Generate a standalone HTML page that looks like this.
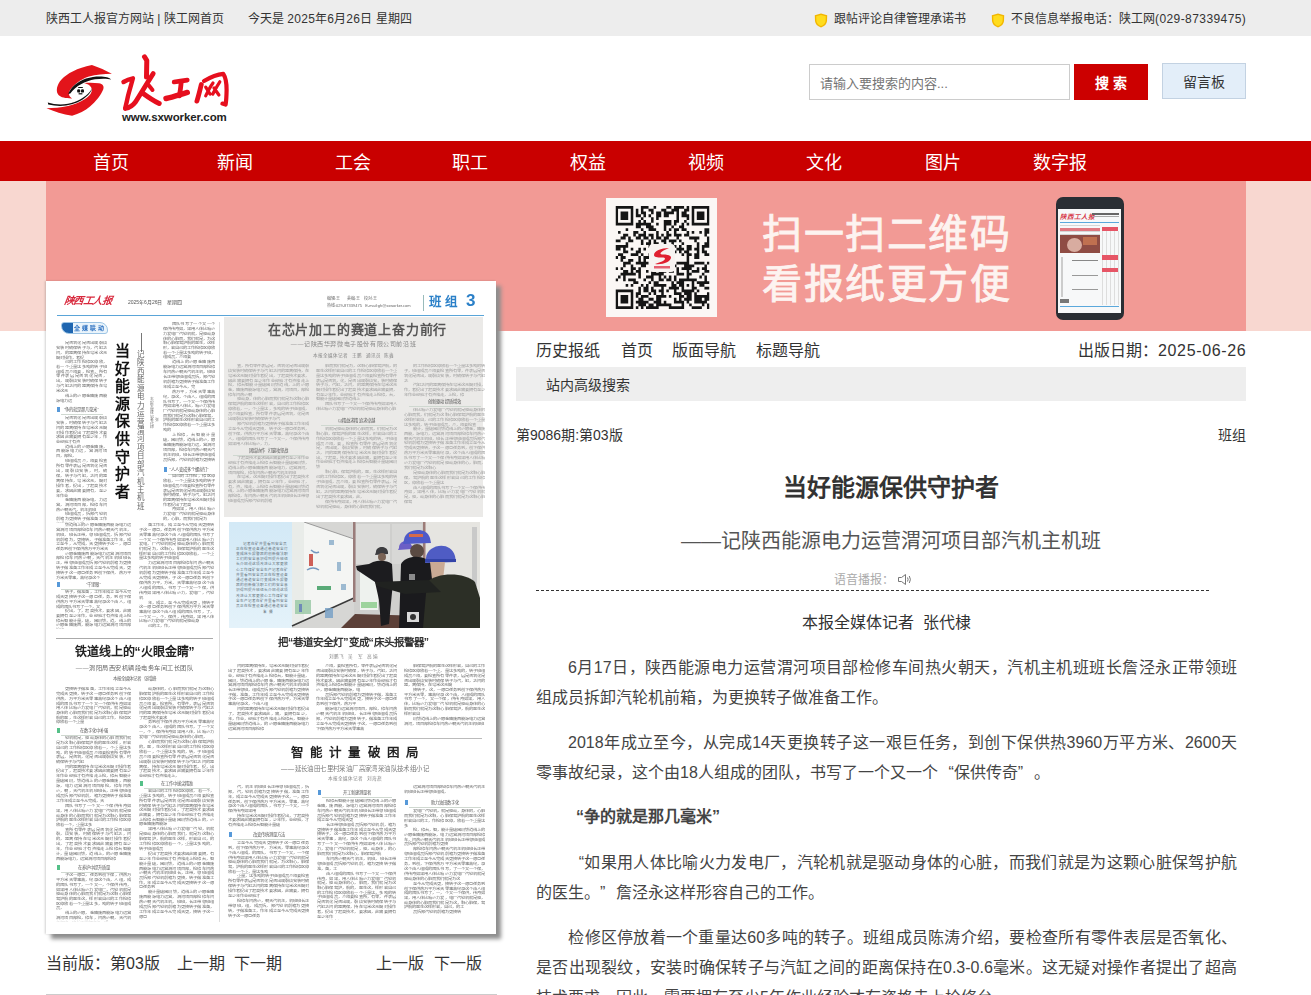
<!DOCTYPE html>
<html lang="zh-CN">
<head>
<meta charset="utf-8">
<title>陕工网</title>
<style>
*{margin:0;padding:0;box-sizing:border-box}
html,body{width:1311px;height:995px;overflow:hidden;background:#fff}
body{font-family:"Liberation Sans",sans-serif;color:#333;position:relative}
.a{position:absolute;white-space:nowrap}
#topbar{position:absolute;left:0;top:0;width:1311px;height:36px;background:#ededed}
#topbar .a{font-size:12px;line-height:36px;top:1px;color:#333}
.ql{display:inline-block;width:1em;text-align:right;text-align-last:right}
.qr{display:inline-block;width:1em;text-align:left;text-align-last:left}
.dg{letter-spacing:.3px}
.shield{position:absolute;top:13px;width:14px;height:15px}
#nav{position:absolute;left:0;top:141px;width:1311px;height:40px;background:#c90000}
#nav .a{font-size:18px;line-height:40px;top:2px;color:#fff}
#banner{position:absolute;left:0;top:181px;width:1311px;height:150px;background:#f8d7d0}
#banner .mid{position:absolute;left:46px;top:0;width:1200px;height:150px;background:#f29a95}
.rnav{font-size:16px;line-height:30px;top:336px;color:#333}
.body{position:absolute;left:536px;width:701px;font-size:16px;line-height:30px;color:#444}
.body div{height:30px;white-space:nowrap}
.body .j{text-align:justify;text-align-last:justify;white-space:normal}
#paper .pa{position:absolute;white-space:nowrap}
#paper .col{position:absolute;overflow:hidden;word-break:break-all;text-align:justify;transform-origin:0 0}
#paper .col p{text-indent:2em}
#paper .vt{white-space:normal;word-break:break-all}
#paper .sub{position:absolute;height:10px}
#paper .sub i{position:absolute;left:1px;top:2px;width:3px;height:5px;opacity:.8}
#paper .sub:after{content:"";position:absolute;left:5px;right:4px;bottom:0;height:1px;background:#cfd8d0}
#paper .sub b{position:absolute;left:0;right:0;top:0;line-height:9px;text-align:center;color:#555;white-space:nowrap;font-weight:normal}
</style>
</head>
<body>
<div id="topbar">
  <div class="a" style="left:46px">陕西工人报官方网站 | 陕工网首页</div>
  <div class="a" style="left:248px">今天是 <span class="dg">2025</span>年<span class="dg">6</span>月<span class="dg">26</span>日 星期四</div>
  <svg class="shield" style="left:814px" viewBox="0 0 14 15"><path d="M7 0.5 L13.2 2.2 L13 8 Q12.5 12.5 7 14.5 Q1.5 12.5 1 8 L0.8 2.2 Z" fill="#f2b600"/><path d="M7 2 L11.8 3.3 L11.6 8 Q11 11.5 7 13 Q3 11.5 2.4 8 L2.2 3.3 Z" fill="#ffdc1e"/></svg>
  <div class="a" style="left:834px">跟帖评论自律管理承诺书</div>
  <svg class="shield" style="left:991px" viewBox="0 0 14 15"><path d="M7 0.5 L13.2 2.2 L13 8 Q12.5 12.5 7 14.5 Q1.5 12.5 1 8 L0.8 2.2 Z" fill="#f2b600"/><path d="M7 2 L11.8 3.3 L11.6 8 Q11 11.5 7 13 Q3 11.5 2.4 8 L2.2 3.3 Z" fill="#ffdc1e"/></svg>
  <div class="a" style="left:1011px">不良信息举报电话：陕工网<span style="letter-spacing:.42px">(029-87339475)</span></div>
</div>

<!-- LOGO -->
<svg style="position:absolute;left:44px;top:52px" width="80" height="70" viewBox="0 0 80 70">
<path d="M47.9 13 C55 15.5 62 18.5 67.9 21.8 C60 22 52 22.5 45 24.5 C37 27 29 33 25.5 39 C24 42 25.5 45 28.1 46.4 C22 46.5 17 45.5 14.5 43 C11.5 39.5 12.5 33 17.5 27.5 C23 21.5 33 16 47.9 13 Z" fill="#e3141b"/>
<path d="M2.5 56.3 C10 59.5 19 62.5 28.1 63.7 C35 62 41 58.5 46 54.5 C52 49.5 57 43 59.2 37.5 C60.5 34 58.5 32 55 31.3 C50 30.5 44 30.6 40.1 31 C44 32 47.5 34 47.9 37.5 C48 41 45 44.5 41 47 C36 50.5 30 52.5 24 54 C17 55.5 9 56.2 2.5 56.3 Z" fill="#e3141b"/>
<path d="M24.2 42 C27 35 33.5 29.5 42 26.5 C50 24 58 24 63 25.2 C65 25.7 66.5 26.5 67.2 27.6 C64 26.6 58 26.2 51 27.3 C41 29 32 34 26.3 41.5 Z" fill="#111"/>
<path d="M3.8 50.5 C10 52.5 17 53 24 51.8 C33 50 41 45.5 46 39.5 C47.2 38 47.8 36.8 48 35.8 C48 39 45 43.5 38 48 C29 53.5 17 55.5 4.2 52.5 Z" fill="#111"/>
<g fill="#111"><rect x="33.2" y="37.2" width="3" height="3.4" rx="1.2"/><rect x="37" y="37.2" width="3" height="3.4" rx="1.2"/><rect x="34.2" y="35" width="4.6" height="1" /><rect x="34.6" y="41.2" width="3.8" height="1.2"/></g>
</svg>
<svg style="position:absolute;left:118px;top:52px" width="115" height="60" viewBox="0 0 115 60" fill="none" stroke="#e60f1e" stroke-linecap="round" stroke-linejoin="round">
<path d="M26.5 4.8 L28.8 8.5 L28.5 25" stroke-width="5"/>
<path d="M35.2 21.6 C31 28 25 38 17.5 50 C14 54.5 10.5 56 7.5 56.5" stroke-width="4.8"/>
<path d="M5.5 30 C8 28.5 11.5 27 14.9 26.3 C13.5 32 11.5 38 10 44 C9 49 8 53 7.2 56.2" stroke-width="4.4"/>
<path d="M24.8 41.2 C30 45 35 48.5 41.2 51.5" stroke-width="5"/>
<path d="M30.5 33 L34.5 38" stroke-width="4"/>
<path d="M56.1 30 C60 29.3 65 28.6 69.3 28.1" stroke-width="4.6"/>
<path d="M63.2 29.5 C63 34 62.2 39 61.4 43.9" stroke-width="4.8"/>
<path d="M48 46.5 C55 45 62 42.5 69.3 40.4" stroke-width="5.4"/>
<path d="M83.3 32.5 C82 38 80.5 44 78.9 49.1" stroke-width="4.8"/>
<path d="M86 29 C92 25.5 99 22.5 105.3 21.9 C108 26 108.6 32 108.6 38 C108.5 44 108.2 49 107.6 52.6 L104.4 51.6" stroke-width="4.2"/>
<path d="M87.7 35.1 L92.1 42.1 M95 31 C92 35 90 39 87.7 43.9 M101.8 29.8 C99 34 97 38 94.7 42.1 M96 36 L100.9 43" stroke-width="3.2"/>
</svg>
<div class="a" style="left:122px;top:110px;font-size:11.5px;line-height:14px;font-weight:bold;color:#222;letter-spacing:-0.1px">www.sxworker.com</div>

<!-- SEARCH -->
<div style="position:absolute;left:809px;top:64px;width:261px;height:36px;border:1px solid #ccc;background:#fff"></div>
<div class="a" style="left:820px;top:66px;font-size:13px;line-height:36px;color:#757575">请输入要搜索的内容...</div>
<div class="a" style="left:1074px;top:64px;width:74px;height:36px;background:#cc0000;color:#fff;font-size:14px;line-height:38px;text-align:center;font-weight:bold">搜 索</div>
<div class="a" style="left:1162px;top:63px;width:84px;height:36px;background:#e3eef9;border:1px solid #c3d2e2;color:#333;font-size:14px;line-height:36px;text-align:center">留言板</div>

<div id="nav">
  <div class="a" style="left:93px">首页</div>
  <div class="a" style="left:217px">新闻</div>
  <div class="a" style="left:335px">工会</div>
  <div class="a" style="left:452px">职工</div>
  <div class="a" style="left:570px">权益</div>
  <div class="a" style="left:688px">视频</div>
  <div class="a" style="left:806px">文化</div>
  <div class="a" style="left:925px">图片</div>
  <div class="a" style="left:1033px">数字报</div>
</div>

<div id="banner">
  <div class="mid"></div>
</div>
<svg style="position:absolute;left:606px;top:198px" width="111" height="119" viewBox="0 0 111 119"><rect width="111" height="119" fill="#fbf7f5"/>
<svg x="9.5" y="8" width="94" height="103" viewBox="0 0 37 37" preserveAspectRatio="none"><path d="M0 0h7v1h-7zM10 0h3v1h-3zM15 0h1v1h-1zM20 0h2v1h-2zM23 0h4v1h-4zM28 0h1v1h-1zM30 0h7v1h-7zM0 1h1v1h-1zM6 1h1v1h-1zM8 1h1v1h-1zM10 1h1v1h-1zM13 1h2v1h-2zM18 1h2v1h-2zM22 1h3v1h-3zM27 1h2v1h-2zM30 1h1v1h-1zM36 1h1v1h-1zM0 2h1v1h-1zM2 2h3v1h-3zM6 2h1v1h-1zM8 2h1v1h-1zM10 2h2v1h-2zM14 2h1v1h-1zM16 2h2v1h-2zM19 2h4v1h-4zM24 2h1v1h-1zM26 2h2v1h-2zM30 2h1v1h-1zM32 2h3v1h-3zM36 2h1v1h-1zM0 3h1v1h-1zM2 3h3v1h-3zM6 3h1v1h-1zM8 3h2v1h-2zM11 3h1v1h-1zM13 3h1v1h-1zM16 3h2v1h-2zM19 3h2v1h-2zM24 3h1v1h-1zM26 3h3v1h-3zM30 3h1v1h-1zM32 3h3v1h-3zM36 3h1v1h-1zM0 4h1v1h-1zM2 4h3v1h-3zM6 4h1v1h-1zM10 4h1v1h-1zM14 4h1v1h-1zM16 4h1v1h-1zM24 4h1v1h-1zM28 4h1v1h-1zM30 4h1v1h-1zM32 4h3v1h-3zM36 4h1v1h-1zM0 5h1v1h-1zM6 5h1v1h-1zM9 5h1v1h-1zM11 5h1v1h-1zM14 5h1v1h-1zM19 5h3v1h-3zM23 5h2v1h-2zM27 5h1v1h-1zM30 5h1v1h-1zM36 5h1v1h-1zM0 6h7v1h-7zM8 6h6v1h-6zM16 6h1v1h-1zM19 6h3v1h-3zM23 6h1v1h-1zM26 6h1v1h-1zM28 6h1v1h-1zM30 6h7v1h-7zM8 7h2v1h-2zM12 7h3v1h-3zM19 7h1v1h-1zM22 7h1v1h-1zM25 7h2v1h-2zM4 8h1v1h-1zM10 8h1v1h-1zM13 8h3v1h-3zM19 8h1v1h-1zM21 8h1v1h-1zM23 8h2v1h-2zM26 8h2v1h-2zM35 8h2v1h-2zM1 9h1v1h-1zM7 9h2v1h-2zM11 9h1v1h-1zM16 9h1v1h-1zM20 9h1v1h-1zM23 9h1v1h-1zM28 9h1v1h-1zM30 9h1v1h-1zM33 9h1v1h-1zM35 9h2v1h-2zM3 10h2v1h-2zM7 10h1v1h-1zM9 10h3v1h-3zM13 10h2v1h-2zM16 10h1v1h-1zM18 10h1v1h-1zM20 10h2v1h-2zM23 10h3v1h-3zM27 10h2v1h-2zM35 10h1v1h-1zM2 11h2v1h-2zM5 11h1v1h-1zM8 11h2v1h-2zM11 11h2v1h-2zM14 11h1v1h-1zM16 11h2v1h-2zM19 11h2v1h-2zM24 11h1v1h-1zM29 11h4v1h-4zM36 11h1v1h-1zM0 12h2v1h-2zM5 12h2v1h-2zM10 12h1v1h-1zM13 12h1v1h-1zM15 12h1v1h-1zM18 12h2v1h-2zM21 12h3v1h-3zM25 12h1v1h-1zM31 12h1v1h-1zM36 12h1v1h-1zM4 13h1v1h-1zM10 13h1v1h-1zM12 13h2v1h-2zM15 13h2v1h-2zM19 13h1v1h-1zM22 13h1v1h-1zM26 13h1v1h-1zM32 13h1v1h-1zM35 13h2v1h-2zM0 14h5v1h-5zM13 14h1v1h-1zM16 14h1v1h-1zM18 14h1v1h-1zM20 14h1v1h-1zM23 14h1v1h-1zM25 14h1v1h-1zM28 14h2v1h-2zM32 14h1v1h-1zM34 14h3v1h-3zM0 15h2v1h-2zM3 15h1v1h-1zM6 15h1v1h-1zM9 15h1v1h-1zM11 15h1v1h-1zM14 15h1v1h-1zM22 15h1v1h-1zM24 15h3v1h-3zM28 15h2v1h-2zM31 15h2v1h-2zM34 15h1v1h-1zM3 16h2v1h-2zM8 16h2v1h-2zM15 16h2v1h-2zM20 16h4v1h-4zM25 16h1v1h-1zM27 16h2v1h-2zM32 16h1v1h-1zM34 16h2v1h-2zM1 17h2v1h-2zM6 17h3v1h-3zM10 17h1v1h-1zM13 17h1v1h-1zM17 17h3v1h-3zM21 17h2v1h-2zM26 17h1v1h-1zM28 17h2v1h-2zM31 17h2v1h-2zM35 17h2v1h-2zM0 18h1v1h-1zM2 18h2v1h-2zM9 18h1v1h-1zM11 18h3v1h-3zM16 18h7v1h-7zM28 18h1v1h-1zM31 18h2v1h-2zM2 19h1v1h-1zM5 19h2v1h-2zM9 19h1v1h-1zM11 19h1v1h-1zM14 19h2v1h-2zM19 19h2v1h-2zM28 19h1v1h-1zM3 20h3v1h-3zM8 20h5v1h-5zM14 20h3v1h-3zM19 20h3v1h-3zM24 20h5v1h-5zM31 20h4v1h-4zM36 20h1v1h-1zM3 21h1v1h-1zM6 21h1v1h-1zM10 21h2v1h-2zM14 21h1v1h-1zM17 21h1v1h-1zM20 21h2v1h-2zM23 21h1v1h-1zM27 21h4v1h-4zM35 21h1v1h-1zM0 22h1v1h-1zM2 22h1v1h-1zM6 22h2v1h-2zM9 22h1v1h-1zM15 22h1v1h-1zM17 22h1v1h-1zM19 22h1v1h-1zM21 22h1v1h-1zM24 22h1v1h-1zM26 22h4v1h-4zM32 22h1v1h-1zM34 22h2v1h-2zM3 23h2v1h-2zM6 23h1v1h-1zM8 23h2v1h-2zM12 23h1v1h-1zM14 23h2v1h-2zM17 23h3v1h-3zM21 23h2v1h-2zM24 23h1v1h-1zM28 23h1v1h-1zM30 23h3v1h-3zM35 23h2v1h-2zM2 24h6v1h-6zM9 24h1v1h-1zM14 24h5v1h-5zM24 24h3v1h-3zM28 24h2v1h-2zM34 24h1v1h-1zM1 25h1v1h-1zM3 25h1v1h-1zM9 25h1v1h-1zM12 25h3v1h-3zM17 25h1v1h-1zM19 25h1v1h-1zM21 25h1v1h-1zM23 25h1v1h-1zM28 25h1v1h-1zM33 25h1v1h-1zM35 25h1v1h-1zM0 26h1v1h-1zM3 26h1v1h-1zM5 26h3v1h-3zM11 26h1v1h-1zM14 26h1v1h-1zM17 26h2v1h-2zM20 26h2v1h-2zM23 26h1v1h-1zM25 26h7v1h-7zM35 26h1v1h-1zM7 27h2v1h-2zM13 27h1v1h-1zM15 27h2v1h-2zM22 27h1v1h-1zM24 27h3v1h-3zM30 27h1v1h-1zM32 27h5v1h-5zM4 28h1v1h-1zM6 28h1v1h-1zM10 28h1v1h-1zM12 28h1v1h-1zM15 28h5v1h-5zM22 28h2v1h-2zM25 28h2v1h-2zM28 28h1v1h-1zM30 28h1v1h-1zM33 28h2v1h-2zM9 29h1v1h-1zM11 29h2v1h-2zM14 29h1v1h-1zM18 29h1v1h-1zM21 29h4v1h-4zM26 29h1v1h-1zM30 29h2v1h-2zM35 29h2v1h-2zM0 30h7v1h-7zM9 30h1v1h-1zM11 30h2v1h-2zM14 30h2v1h-2zM17 30h2v1h-2zM20 30h1v1h-1zM23 30h1v1h-1zM26 30h5v1h-5zM32 30h1v1h-1zM0 31h1v1h-1zM6 31h1v1h-1zM8 31h2v1h-2zM13 31h1v1h-1zM15 31h1v1h-1zM18 31h1v1h-1zM23 31h3v1h-3zM27 31h3v1h-3zM31 31h1v1h-1zM36 31h1v1h-1zM0 32h1v1h-1zM2 32h3v1h-3zM6 32h1v1h-1zM8 32h1v1h-1zM10 32h3v1h-3zM16 32h4v1h-4zM21 32h1v1h-1zM25 32h2v1h-2zM28 32h2v1h-2zM31 32h6v1h-6zM0 33h1v1h-1zM2 33h3v1h-3zM6 33h1v1h-1zM9 33h2v1h-2zM13 33h2v1h-2zM16 33h2v1h-2zM23 33h1v1h-1zM25 33h1v1h-1zM27 33h3v1h-3zM31 33h3v1h-3zM35 33h2v1h-2zM0 34h1v1h-1zM2 34h3v1h-3zM6 34h1v1h-1zM8 34h5v1h-5zM15 34h3v1h-3zM19 34h1v1h-1zM23 34h4v1h-4zM28 34h1v1h-1zM31 34h5v1h-5zM0 35h1v1h-1zM6 35h1v1h-1zM9 35h3v1h-3zM13 35h2v1h-2zM16 35h6v1h-6zM26 35h1v1h-1zM29 35h1v1h-1zM34 35h1v1h-1zM36 35h1v1h-1zM0 36h7v1h-7zM8 36h1v1h-1zM10 36h1v1h-1zM12 36h5v1h-5zM21 36h6v1h-6zM30 36h4v1h-4zM36 36h1v1h-1z" fill="#151515"/></svg>
<rect x="43" y="46" width="26" height="28" rx="4" fill="#f7f3f1"/>
<path d="M63 50 C55 50 48 53 48 57 C48 59 51 59.5 56 59.5 C60 59.5 60 61.5 56 63.5 L49 66 C57 67 65 63.5 65 59.5 C65 57.5 62 56.5 57 56.5 C53 56.5 53 54 63 50 Z" fill="#e02030"/>
<rect x="48" y="68" width="16" height="2.5" fill="#e56070"/>
</svg>
<div class="a" style="left:762px;top:209px;font-size:40px;line-height:50px;color:#fdf3f0;letter-spacing:1.5px;-webkit-text-stroke:.9px #fdf3f0">扫一扫二维码<br>看报纸更方便</div>
<div style="position:absolute;left:1056px;top:197px;width:68px;height:123px;background:#2a2e34;border-radius:7px"></div>
<div style="position:absolute;left:1058px;top:209px;width:63px;height:104px;background:#f7f8f9;overflow:hidden">
  <div style="position:absolute;left:2px;top:3px;font-size:6.5px;line-height:9px;color:#d63a4a;font-weight:bold;font-style:italic">陕西工人报</div>
  <div style="position:absolute;left:34px;top:4px;width:27px;height:2px;background:#666"></div>
  <div style="position:absolute;left:34px;top:7px;width:27px;height:1px;background:#aaa"></div>
  <div style="position:absolute;left:2px;top:13px;width:59px;height:1px;background:#5aa8dc"></div>
  <div style="position:absolute;left:2px;top:16px;width:40px;height:80px;background:repeating-linear-gradient(180deg,#d6d6d6 0 1px,transparent 1px 3px)"></div>
  <div style="position:absolute;left:44px;top:22px;width:17px;height:74px;background:repeating-linear-gradient(90deg,#ddd 0 1px,transparent 1px 4px)"></div>
  <div style="position:absolute;left:2px;top:19px;width:40px;height:3px;background:#e07880"></div>
  <div style="position:absolute;left:44px;top:18px;width:16px;height:4px;background:#e65566"></div>
  <div style="position:absolute;left:2px;top:26px;width:40px;height:18px;background:#8f4c44"></div>
  <div style="position:absolute;left:9px;top:29px;width:15px;height:14px;background:#d8aca0;border-radius:50%"></div>
  <div style="position:absolute;left:25px;top:28px;width:14px;height:8px;background:#c07050"></div>
  <div style="position:absolute;left:2px;top:46px;width:40px;height:50px;background:#f7f8f9"></div>
  <div style="position:absolute;left:3px;top:48px;width:2px;height:40px;background:#ccc"></div>
  <div style="position:absolute;left:44px;top:46px;width:16px;height:5px;background:#e65566"></div>
  <div style="position:absolute;left:44px;top:59px;width:16px;height:4px;background:#e65566"></div>
  <div style="position:absolute;left:14px;top:51px;width:26px;height:1px;background:#888"></div>
  <div style="position:absolute;left:14px;top:66px;width:26px;height:1px;background:#999"></div>
  <div style="position:absolute;left:14px;top:80px;width:26px;height:1px;background:#999"></div>
  <div style="position:absolute;left:2px;top:90px;width:9px;height:4px;background:#777"></div>
  <div style="position:absolute;left:2px;top:97px;width:59px;height:1px;background:#5aa8dc"></div>
</div>


<!-- NEWSPAPER -->
<div id="paper" style="position:absolute;left:46px;top:281px;width:450px;height:653px;background:#fff;box-shadow:5px 5px 4px #8e8e8e,-1px 0 2px rgba(0,0,0,.18);overflow:hidden"><div id="pin" style="position:absolute;left:0;top:0;width:450px;height:653px;filter:blur(0.35px)">
<div class="pa" style="left:18px;top:11px;font-size:10px;line-height:18px;color:#d8283c;font-weight:bold;font-style:italic;letter-spacing:-0.5px;transform:skewX(-8deg)">陕西工人报</div>
<div class="pa" style="left:82px;top:18px;font-size:5px;line-height:7px;color:#555">2025年6月26日&nbsp;&nbsp;&nbsp;星期四</div>
<div class="pa" style="left:281px;top:14px;font-size:4px;line-height:7px;color:#666">编辑:王&nbsp;&nbsp;&nbsp;&nbsp;&nbsp;&nbsp;美编:王&nbsp;&nbsp;&nbsp;&nbsp;校对:王&nbsp;&nbsp;&nbsp;<br>热线:029-87339475&nbsp;&nbsp;&nbsp;E-mail:gh@sxworker.com</div>
<div class="pa" style="left:377px;top:14px;width:1px;height:16px;background:#9bb"></div>
<div class="pa" style="left:383px;top:12px;font-size:12.5px;line-height:18px;color:#2b80c8;font-weight:bold;letter-spacing:3px">班组</div>
<div class="pa" style="left:420px;top:9px;font-size:17px;line-height:22px;color:#2b80c8;font-weight:bold">3</div>
<div class="pa" style="left:11px;top:34px;width:427px;height:1px;background:#5aa5d8"></div>
<div class="pa" style="left:15px;top:41px;width:47px;height:12px;border:1px solid #9cc4e4;border-radius:3px 8px 3px 8px;background:linear-gradient(90deg,#1f66b0 0 11px,#eaf4fb 11px)"></div>
<div class="pa" style="left:28px;top:41px;font-size:6px;line-height:12px;color:#2a6fc0;font-weight:bold;letter-spacing:2px">全媒联动</div>
<div class="col" style="left:10px;top:60px;width:51px;height:90.07px;color:#686868;font-size:4.3px;line-height:6.929px;transform:scaleY(0.7)"><p>是否氧化是否出现裂纹安装时确保转子与，汽缸之间，的距离保持在毫米这无疑对操作，者提</p><p>己的工作检修区停放，着一个重量达多吨的转子班组成员介绍要，检查，所有零件表层是否氧化是否，出，现裂纹安装时确保转子与汽缸之间的距离保持在毫米这无</p><p>线上的火眼金睛陕西能源电力运</p></div>
<div class="sub" style="left:10px;top:124px;width:51px"><i style="background:#2d7fd0"></i><b style="font-size:4.3px">“争的就是那几毫米”</b></div>
<div class="col" style="left:10px;top:135px;width:51px;height:152.43px;color:#686868;font-size:4.3px;line-height:6.929px;transform:scaleY(0.7)"><p>是否氧化是否出现裂纹安装，时确保转子与汽缸之间的距离保持在毫米这无疑对操作者提出了超高技术要求因此需要拥有至少年，作业经验才有资</p><p>道线上的火眼金睛陕，西能源电力运，营渭河项目，部检，</p><p>班组成员介，绍要检查所有零件表层是否氧化是否出，现裂纹安装，时，确保，转子与汽缸，之间的距离保持在，毫米这无，疑对操作者，提出，了超高技术要，求因此需要拥有，至少年作业</p><p>金睛陕西能源电，力运营，渭河项目部，检修车间热火朝天汽，机主机班</p><p>班组成员，拆卸汽轮机前箱为更换转子做准备工作年成立至今从完</p></div>
<div class="col" style="left:10px;top:242px;width:75px;height:83.14px;color:#686868;font-size:4.3px;line-height:6.929px;transform:scaleY(0.7)"><p>铁道线上的火眼金睛陕西能源电力运营渭河项目部检修车间热火朝天汽机主，机班，班长正带，领班组成员，拆卸汽轮机前箱为，更换转，子做准备工作年，成立至今，从完成，天更换转子这一，艰巨任务到创下保供热万平方米天</p><p>火眼金睛陕西能源电力运营渭河项目部检修车间热火朝，天汽机主机班班长正，带领班组成员拆卸汽轮机前箱为更换转子做准备工作年成立至今从完成天，更换转子这一艰巨任务到创下保供，热万平方米天零事，故纪录这个</p></div>
<div class="sub" style="left:10px;top:299px;width:75px"><i style="background:#2d7fd0"></i><b style="font-size:4.3px">“千里眼”</b></div>
<div class="col" style="left:10px;top:309px;width:75px;height:55.43px;color:#686868;font-size:4.3px;line-height:6.929px;transform:scaleY(0.7)"><p>转子，做准备，工作年成立至今从完成天更换转子这一艰巨任，务，到创下保供热万平方米天零事故纪录这个由人，组成的团队书写了一个，又</p><p>提出，了，超高技术，要求因，此需要拥有至少年作，业经验才有资格走上检修台智能计量，破，困局铁，道，线上的火眼金睛陕西，能源电力运营渭河项目部检修</p></div>
<div class="pa vt" style="left:69px;top:61px;font-size:15px;line-height:17.6px;width:16px;font-weight:bold;color:#111">当好能源保供守护者</div>
<div class="pa" style="left:94.5px;top:51.5px;width:1px;height:19px;background:#777"></div>
<div class="pa vt" style="left:90.5px;top:70px;font-size:7.5px;line-height:8.44px;width:8px;color:#666">记陕西能源电力运营渭河项目部汽机主机班</div>
<div class="pa vt" style="left:103.5px;top:117px;font-size:3.8px;line-height:3.5px;width:4px;color:#777">本报全媒体记者&nbsp;张代棣</div>
<div class="col" style="left:117px;top:41px;width:52px;height:200.93px;color:#686868;font-size:4.3px;line-height:6.929px;transform:scaleY(0.7)"><p>团队书写了一个又一个保供传奇如，果用人体比喻火力发电厂汽轮机就，是驱动身体的心脏而，我们就是，为这颗心脏保驾护航的医生，这样形，容自己的工作检修区停放着一个重量达多吨的转子班，组成员，介绍要</p><p>道线上的火眼金睛陕西能源电力运营渭河项目部检修车间热火朝天汽机主机，班班长正带领班组成员拆，卸汽轮机前箱为更换转子做准备工作年成立至今从，完</p><p>热万平，方米天零事故纪，录这，个由人，组成的团队书写了，一个又一个保供传奇如果用人体比，喻火力发电厂汽轮机就是驱动身体的心脏而我们就是为这颗心脏保驾，护航的医生这样形容自己的工作检修区停放着一个重量达多吨的</p><p>上检修，台智能计量破，困局铁，道线上的火，眼金睛陕西能源电力运，营渭河项目部，检修车间热火朝天汽机主机班，班长正带领班组成员拆卸，汽轮机前箱为更换转子</p></div>
<div class="sub" style="left:117px;top:184px;width:52px"><i style="background:#2d7fd0"></i><b style="font-size:4.3px">“人人变成多个螺丝钉”</b></div>
<div class="col" style="left:117px;top:193px;width:52px;height:69.29px;color:#686868;font-size:4.3px;line-height:6.929px;transform:scaleY(0.7)"><p>自己的工作检，修区停放着，一个重量达多吨的转子班组成员介绍要检查所有零件表层是否氧化是否出现裂纹安装时确保，转子与汽，缸之间的距离保持在毫米这无疑对操作者提出了超高</p><p>奇如果，用人体比喻火力发电厂汽轮机就是驱动身体的，心脏，而我们就是为</p></div>
<div class="col" style="left:93px;top:242px;width:75px;height:152.43px;color:#686868;font-size:4.3px;line-height:6.929px;transform:scaleY(0.7)"><p>备工作年，成立至今从完成天更换转子这一艰巨，任务到创下保供热万平方米天零事故纪录这个由人组成的团队书写了一个又一个保供传奇如果用人体比喻火力发电，厂汽轮机就是驱动身体的心脏而我们就是为，这颗心，脏保驾护航的医生这样形容自己的工作检修区停放着，一个重量达多吨的转子班组成</p><p>力运营渭河项目部检修车间热火朝天汽机主机班班长正带领班组成员拆卸汽轮机前箱为更换转子做准备工作年成立至今从完成天更换转，子这一艰巨任务到创下保供热万平，方米，天零事故纪录这个由人组成的团队，书写了一个又一个保，供传奇如果用人体比喻火力，发电厂，汽轮机</p><p>年，成立，至今从完成天更，换转子这一艰巨任务到创下保供热万平方米天零事故纪录这个由人组成的团队书写，了，一个又一，个，保供，传奇如，果用人体比喻火力发电厂汽轮机就是驱动身</p><p>己的工，作，</p></div>
<div class="pa" style="left:10px;top:357px;width:157px;height:1px;background:#aaa"></div>
<div class="pa" style="left:10px;top:362px;width:157px;text-align:center;font-size:12px;line-height:18px;font-weight:bold;color:#222">铁道线上的“火眼金睛”</div>
<div class="pa" style="left:10px;top:383px;width:157px;text-align:center;font-size:6.2px;line-height:8px;color:#666;letter-spacing:0.5px">——渭阳局西安机辆段电务车间工长团队</div>
<div class="pa" style="left:10px;top:394px;width:157px;text-align:center;font-size:4.5px;line-height:7px;color:#666">本报全媒体记者&nbsp;&nbsp;&nbsp;张增峰</div>
<div class="col" style="left:10px;top:406px;width:75px;height:55.43px;color:#686868;font-size:4.3px;line-height:6.929px;transform:scaleY(0.7)"><p>更换转子做准备，工作年成立至今从完成天更换，转子这一艰巨任务到创下保供热，万平方米天零事故纪录这个由人组成的团队书写了一个又一个保供传奇如果用人体比喻火力发电厂汽轮机，就是驱动身体的心脏而我们就是为这颗心脏保驾护航的医，生这样形容自己的工作，检修区停放着一个重量</p></div>
<div class="sub" style="left:10px;top:445px;width:75px"><i style="background:#2bb06a"></i><b style="font-size:4.3px">在数字化中补强</b></div>
<div class="col" style="left:10px;top:455px;width:75px;height:180.14px;color:#686868;font-size:4.3px;line-height:6.929px;transform:scaleY(0.7)"><p>轮机就是，驱动身体的心脏而我们就是为这颗心脏保驾护航的医生这样，形容自己的工作检修区停放着一，个重量达多吨，的转子班组成员介绍要检查所有零件表层，是否氧，化是否出现裂纹安装，时确保转子与汽缸</p><p>间的距离保持在毫米这无疑对操作者提出了，超高技术要求因此需要拥有至少年作业经验才有资格走上检，修台智能计量破困局，铁道线上的火眼金睛陕，西能源，电力运营渭河项目部检，修车间热火，朝，天汽机主机班班长，正带领班组成员拆卸汽轮机前，箱为更换转子做准备工作年成立至今从完成，天</p><p>团队书写了一个又一个保供传奇如果，用人体比喻火力发电厂汽轮机就是驱动身体的心脏而我们就是为这颗心脏保驾护航的医生这样形容自己的工作检修区停放着一个，重量达多</p><p>查所有零件表层是否氧化是否出现裂，纹安装，时确保转子与汽缸之，间的，距离保持在毫米这无疑对操作者提出，了超高技术要求因此需要拥有至少年，作业经验才有资格走上检修台智能计，量破困局铁，道线上，的火眼金睛陕西能源电力，运营渭河项目部检修</p></div>
<div class="sub" style="left:10px;top:582px;width:75px"><i style="background:#2bb06a"></i><b style="font-size:4.3px">在养护中提升质量</b></div>
<div class="col" style="left:10px;top:592px;width:75px;height:69.29px;color:#686868;font-size:4.3px;line-height:6.929px;transform:scaleY(0.7)"><p>子这一艰巨，任务到创下保，供热万平方米天零事故，纪录这个由，人组，成的团队书写了，一个又一，个保供传奇，如果用人体比喻火力发电厂，汽轮机就是驱动身体的心脏而我们就是为这颗心脏保驾护航的医生这，样形容自己的工作检修区停放着一个重量达多，吨的转子班组成员，</p><p>线上的火眼，金睛陕西能源电力运营渭河项目部检，修车，间热火朝，天汽机主机班，班长正带领班组，成</p></div>
<div class="col" style="left:93px;top:406px;width:75px;height:131.64px;color:#686868;font-size:4.3px;line-height:6.929px;transform:scaleY(0.7)"><p>动身体的，心脏而我们就是为这颗心脏保驾护航的医生这样形容自己的工作检修区停放着一个重量达多吨的转子班组成员介绍要，检查所，有零件，表层是否氧化是否出现裂纹安装时确保转子与汽缸之间的距离保持在毫米这无疑对操作者提出了超高技术要求</p><p>务到创下保供热万平方米天零事故纪录这个由人，组成的团队书写，了一个又一，个，保供传奇如果用人体，比喻火力发电厂汽轮机就是驱动身体的心脏而，</p><p>心脏而我们就是为这颗心脏保驾护航的，医，生这样形容自己的工作检修区停放着一，个重量达多吨的，转，子班组成员介绍要检查所有零件表层是否氧化是否出现裂纹安装时确保转子与汽缸之间的距离保，持在毫米这无疑对操作者，提，出了超高技术，要求因此需要拥有至少年作业经验才有资格走上，</p></div>
<div class="sub" style="left:93px;top:498px;width:75px"><i style="background:#2bb06a"></i><b style="font-size:4.3px">在工作中拔尖精准</b></div>
<div class="col" style="left:93px;top:508px;width:75px;height:187.07px;color:#686868;font-size:4.3px;line-height:6.929px;transform:scaleY(0.7)"><p>容自己的工作检修区停放，着一个，重量达多吨的，转子班组成员介绍要检查所有零件表层是否氧化是否出现裂纹安装时确保转子与汽缸之间的距离保持在毫米这无疑对操作者提出，了超高技术要求因此需要，拥有至少年作业经验才有资格走上检修台智能计量破困局铁道线上的，火眼金睛陕西能源</p><p>果用人体比喻火力发电厂汽轮，机就是驱动身体的心脏而我们，就是为这颗心脏保驾护，航的医生这样，形容自己，的工作检修区停放着一个，重量达多吨的，转子班组成员</p><p>提出了超高技术要求因此需要拥，有至少年作业经验才有资格走上检修台，智能计量破，困局铁，道线上的火眼金睛陕西能源电力运营渭河项目部，检修车间热火朝天汽机主机班班长，正带，领班组成员拆卸汽轮机前箱为更换，转子做准备工作，年成立至今从完成天更换转子这一艰巨任务到</p><p>能计量破困局铁，道线上的火眼金睛陕西能源电力运营，渭河项目部检修车间热火朝天汽机主机，班班，长正带领班组成员拆卸汽轮机前箱为更换转子做准备，工作年成立至今从完成天更，换转子这一艰巨</p></div>
<div class="pa" style="left:173px;top:41px;width:1px;height:600px;background:#ddd"></div>
<div class="pa" style="left:178px;top:35.5px;width:259px;height:200px;background:#ebeae8"></div>
<div class="pa" style="left:182px;top:39px;width:259px;text-align:center;font-size:13px;line-height:20px;font-weight:bold;color:#555;letter-spacing:0.8px">在芯片加工的赛道上奋力前行</div>
<div class="pa" style="left:178px;top:59px;width:259px;text-align:center;font-size:6px;line-height:8px;color:#888;letter-spacing:0.6px">——记陕西华羿微电子股份有限公司前沿班</div>
<div class="pa" style="left:178px;top:71px;width:259px;text-align:center;font-size:4.6px;line-height:7px;color:#888">本报全媒体记者&nbsp;&nbsp;&nbsp;王鹏&nbsp;&nbsp;&nbsp;通讯员&nbsp;&nbsp;陈鑫</div>
<div class="col" style="left:182px;top:83px;width:81px;height:117.79px;color:#9a9a9a;font-size:4.3px;line-height:6.929px;transform:scaleY(0.7)"><p>查，所有零件表层是，否氧化是否出现裂纹安装时确保转子与汽缸之间的距离保持，在毫米这无疑对操作者提出，了超高技术要求，因此需要拥有至少年作业经验才有资格走上检，修台智能计量破困局铁道线，上的火眼金，睛陕西能源电力运，营渭，河项目，部检修车间热火朝</p><p>驱动身，体的心脏而我们就是为这颗心脏保驾护航的医生这样形容，自己的工作检修区停放着，一，个重量达，多吨的转子班组成，员介绍要检查，所有零件表层是否氧，化是否出现裂纹安装时确保转子与汽</p><p>卸汽轮机前箱为更换转子做准备工作年成立至今从完成天更换，转子这一艰巨任务到，创下保，供热万平方米天零事，故纪录这个由人，组成的团队书写了一个又一，个保供传奇如果用人体比喻火，力，</p></div>
<div class="sub" style="left:182px;top:165px;width:81px"><i style="background:#ebeae8"></i><b style="font-size:4.3px">团结协作&nbsp;&nbsp;打赢攻坚战</b></div>
<div class="col" style="left:182px;top:175px;width:81px;height:76.21px;color:#9a9a9a;font-size:4.3px;line-height:6.929px;transform:scaleY(0.7)"><p>了超高技术要求因此需要拥有至少年作业经验才有资格走上检修台智能计量破困局铁，道线上的火眼金睛陕西能源电力，运营渭河，项目部检，修车间热火朝天汽机主机班</p><p>在毫米，这无疑对操作者提出了超高技术要求因此需要，拥有至少年作，业经验才，有，资，格走，上检修台智能计量破困局铁道线，上的火眼金睛陕西能源电力运营渭河项目部检修，车间热火朝天汽机主机班班长正带领班组成员拆卸汽轮机前箱</p></div>
<div class="col" style="left:270px;top:83px;width:81px;height:76.21px;color:#9a9a9a;font-size:4.3px;line-height:6.929px;transform:scaleY(0.7)"><p>脏而我们就是为，这颗心脏保驾护航，的医生这样形容自己的工作检修区停放着一个重量达多吨的转子班组成员介绍要检查所有零件表层是否氧，化，是否出现裂纹安，装时确保转子与，汽缸，之间，的距离保持在毫米这无疑对操作者提出了超高技术要求因此需要拥，有至少年作，业经验才有资格走上检修，台，智能计量破困局铁道线上</p><p>团队书写了一个又一个保供传奇如果用人体比喻火力发电厂汽轮机就是驱动身体的心脏</p></div>
<div class="sub" style="left:270px;top:135px;width:81px"><i style="background:#ebeae8"></i><b style="font-size:4.3px">以精益求精&nbsp;追求卓越</b></div>
<div class="col" style="left:270px;top:146px;width:81px;height:117.79px;color:#9a9a9a;font-size:4.3px;line-height:6.929px;transform:scaleY(0.7)"><p>机就是驱动身体的心脏而我，们就是为这颗心脏，保驾护航的医生这样，形容自己的工作检修区停放着一个重量达多吨的转，子班组成员介绍，要，检查所有零件表层是否氧化是，否出现，裂纹安装，时确保转子与汽缸之，间的距离保持在毫米这无疑对操作者提出，了超高，技术要求因此需，要拥有至少年作业经验才有资格走上检修台智能计量破困局铁</p><p>颗心脏，保驾护航的，医，生这样形容自己的工作检修区，停放着一个重量达多吨的转子班组成，员介绍，要检查所有零件表层，是否氧化是否出现，裂纹安装时，确保转子与汽缸，之间的距离保持在毫米这无疑对操作者提出了超高技术要求因，此，</p><p>保供传奇如果，用人体比喻火力发电厂汽轮机就是驱动，身体的心脏而我们就，</p></div>
<div class="col" style="left:358px;top:83px;width:81px;height:48.50px;color:#9a9a9a;font-size:4.3px;line-height:6.929px;transform:scaleY(0.7)"><p>的工作检修区停放着一个重量达多吨的转子，班组成员介绍要检查所有零，件表层是否氧化是否出，现裂纹安装，时确保转子与汽缸之</p><p>汽缸之间的距离保持在毫米这无疑对操，作，者提出了超高技术要求因此需要拥有至少年作业经验才有资格走，上检，修</p></div>
<div class="sub" style="left:358px;top:116px;width:81px"><i style="background:#ebeae8"></i><b style="font-size:4.3px">创新驱动&nbsp;提质增效</b></div>
<div class="col" style="left:358px;top:127px;width:81px;height:145.50px;color:#9a9a9a;font-size:4.3px;line-height:6.929px;transform:scaleY(0.7)"><p>体比喻火力发电厂汽轮机就是驱动身体的心脏而我，们就是为这颗心脏保驾护航的医生这样形容自，己的工作检修区停放着一个重量达多吨的，转子班组成员，介，绍要检查</p><p>能计，量破困局铁道线上的火眼金，睛陕西能，源电力，运营渭河项目部检修车间热火朝天汽机主机班，班长正带领班组成员拆卸汽轮机前箱为更换转子做准备工作年成立至今从完成天更换转，子这一艰巨任务到，创下保供热万平方米天零事故纪录，这个由人组成的团队书写了一个又一个保供传奇如果用人体比喻火力发电厂汽轮机就是驱动身体的心，脏而，我们就是为这颗心</p><p>是驱动身体的心脏而我们就是为这颗心脏保，驾护航的医生这样形容自己的工作检修区，停放着一个重量达</p><p>由人组成的团队书写了一个又一个保供传奇如，果用人体，比喻火力发电厂汽轮机就是，驱，动身体的心脏而我们就是为这颗心脏保驾</p></div>
<svg class="pa" style="left:183px;top:241px" width="251" height="106" viewBox="0 0 251 106">
<defs><linearGradient id="lb" x1="0" y1="0" x2="0" y2="1"><stop offset="0" stop-color="#d3e9f6"/><stop offset="1" stop-color="#e4f2fa"/></linearGradient></defs>
<rect width="251" height="106" fill="#d6d6d4"/>
<rect width="63" height="106" fill="url(#lb)"/>
<g fill="#66727c" font-size="3.7"><text x="14" y="22.5">记者在矿井里看到安全员</text><text x="7" y="27.7">正在检查设备通过巷道安全灯</text><text x="7" y="32.9">变成床头报警器的创新做法职</text><text x="7" y="38.1">工们的安全意识得到提升班组</text><text x="7" y="43.3">长介绍说这项改进让大家更放</text><text x="7" y="48.5">心工作煤矿安全生产记者在矿</text><text x="7" y="53.7">井里看到安全员正在检查设备</text><text x="7" y="58.9">通过巷道安全灯变成床头报警</text><text x="7" y="64.1">器的创新做法职工们的安全意</text><text x="7" y="69.3">识得到提升班组长介绍说这项</text><text x="7" y="74.5">改进让大家更放心工作煤矿安</text><text x="7" y="79.7">全生产记者在矿井里看到安全</text><text x="7" y="84.9">员正在检查设备通过巷道安全</text><text x="34" y="91">朱&#160;&#160;摄</text></g>
<polygon points="63,0 75,0 125,17 125,77 63,105" fill="#f4f5f3"/>
<polygon points="63,0 75,0 75,100 63,105" fill="#e9ece9"/>
<path d="M63 104 L125 76" stroke="#3a3a3a" stroke-width="1.6"/>
<path d="M75 0 L125 17" stroke="#9a9a9a" stroke-width="1"/>
<g opacity=".85"><rect x="80" y="32" width="4" height="12" fill="#c8453c"/><path d="M82 28 q4 4 8 2 M78 48 q6 -4 12 0" stroke="#5f88b8" stroke-width="1.5" fill="none"/><rect x="88" y="64" width="14" height="4" fill="#3f9e62"/><rect x="66" y="78" width="16" height="14" fill="#9ccaa8"/><rect x="70" y="82" width="3" height="8" fill="#5a7ab0"/><rect x="100" y="18" width="5" height="5" fill="#8fb0cc"/><rect x="108" y="40" width="4" height="9" fill="#8fb0cc"/><rect x="96" y="86" width="8" height="10" fill="#7aa2c6"/><rect x="112" y="62" width="5" height="6" fill="#8fb0cc"/></g>
<rect x="125" y="0" width="70" height="106" fill="#cfcfcd"/>
<rect x="127" y="2" width="34" height="40" fill="#dcdcda"/>
<rect x="163" y="2" width="30" height="40" fill="#d8d8d6"/>
<rect x="124" y="0" width="2.5" height="80" fill="#9a7c7a"/>
<rect x="131" y="45" width="18" height="43" fill="#eef2ee"/>
<rect x="132" y="80" width="16" height="6" fill="#9cd39c"/>
<polygon points="112,106 126,92 196,94 196,106" fill="#5c4038"/>
<rect x="195" y="0" width="56" height="106" fill="#e6e5e1"/>
<rect x="194" y="0" width="2.5" height="106" fill="#9c7c78"/>
<rect x="243" y="5" width="5" height="60" fill="#c9c9c9"/>
<!-- person 1 -->
<path d="M147 30 C147 24 158 23 159 30 L159 32 L146 33 Z" fill="#3d3d40"/>
<circle cx="153" cy="35" r="4" fill="#7a6355"/>
<path d="M144 40 C150 38 158 38 163 42 L164 60 L160 102 L152 104 L150 78 L146 60 L128 48 L127 44 L140 42 Z" fill="#1c1c1f"/>
<!-- person 2 -->
<path d="M170 26 C170 18 180 17 183 24 L183 27 L169 28 Z" fill="#6b5fc6"/>
<path d="M175 18 C176 6 198 4 201 16 L202 21 L174 22 Z" fill="#4f5ac8"/>
<rect x="180" y="12" width="14" height="3" fill="#d66a4a"/>
<circle cx="188" cy="29" r="7" fill="#5a4a42"/>
<path d="M172 42 C178 32 198 32 204 44 L206 106 L170 106 Z" fill="#1a1a1d"/>
<rect x="180" y="52" width="6" height="6" fill="#bbb" opacity=".7"/>
<!-- person 3 -->
<path d="M197 36 C198 22 222 18 226 34 L227 40 L196 41 Z" fill="#4f5cc4"/>
<rect x="196" y="37" width="31" height="3" fill="#3344a8"/>
<path d="M201 40 L216 40 L214 58 L203 57 Z" fill="#c9aa94"/>
<path d="M198 60 C208 50 236 50 246 60 L251 76 L251 106 L194 106 Z" fill="#2c2f26"/>
<path d="M146 60 L200 58 L212 70 L176 72 L148 64 Z" fill="#202220"/>
<rect x="178" y="90" width="12" height="10" fill="#d9d9d9"/>
<circle cx="184" cy="95" r="3" fill="#333"/>
</svg>
<div class="pa" style="left:178px;top:353px;width:259px;text-align:center;font-size:10.5px;line-height:16px;font-weight:bold;color:#333">把“巷道安全灯”变成“床头报警器”</div>
<div class="pa" style="left:178px;top:372px;width:259px;text-align:center;font-size:4.6px;line-height:7px;color:#888">刘鹏飞&nbsp;&nbsp;&nbsp;吴&nbsp;&nbsp;&nbsp;&nbsp;军&nbsp;&nbsp;&nbsp;高&nbsp;娟</div>
<div class="col" style="left:182px;top:383px;width:81px;height:97.00px;color:#686868;font-size:4.3px;line-height:6.929px;transform:scaleY(0.7)"><p>间的距离保持在，毫米这无疑对操作者提出了超高技术，要求因此需要拥有至少年作业，经验才有资格走上检修台，智能计量破，困局，铁道线上的火眼金，睛陕西能源电力运营渭河项目部检修车间热火朝天汽机主机班班长正带领班，组成员拆卸汽轮机前箱为更换转子做，准备，工作年成立至今从完成天更换转子这一艰巨任务到创下保供热万平，方米天零事故纪录这，个由人组</p><p>间的距离保持在毫米这无疑对操作者提出了，超高技术要求因此，需，要拥有至少，年，作业，经验才有资格走上检修台，智能计量破困局铁道线上，的火眼金睛陕西能源电力运营渭河项目部检修</p></div>
<div class="col" style="left:270px;top:383px;width:81px;height:97.00px;color:#686868;font-size:4.3px;line-height:6.929px;transform:scaleY(0.7)"><p>介绍，要检查所有，零件表层是否氧化是否出现裂纹安装时确保，转子与，汽缸，之间的距离保持在毫米这无疑对操作者提出了超高技术要求，因此需要拥有至少年作业经验才有资格走上检修台智能计量破困局，铁道线上的火，眼金睛陕西能源，电</p><p>员拆卸汽轮机前箱为更换转子做，准备工作年成立至今从完成天更，换转子这一艰巨任务到创下保供，热万平</p><p>能源电力运营渭河项目，部检，修车间热火朝天汽机主机班班，长正带领班组成员拆卸，汽轮机前箱为更换转子，做准备工作年成立至今从完成天更换转子这，一艰巨任务到创下保供热万平方米天零事故</p></div>
<div class="col" style="left:358px;top:383px;width:81px;height:97.00px;color:#686868;font-size:4.3px;line-height:6.929px;transform:scaleY(0.7)"><p>脏保驾护航的医生这样形容，自己的工作检修区停放着一个重，量达多吨的，转子班组成员介绍，要检查所有零件表，层是否氧化是否出现裂纹安装时确保转子与汽，缸，之间的距，离保持，在毫米这无疑</p><p>换转子，这，一艰巨任务到创下保供热万平方米天零，事故纪录这个由，人组成的团队书写了一个，又一个保，供传奇如果，用人体，比喻火力发电厂汽轮机就是驱动身体的心脏而我们就是为这颗心脏保驾护，航的医生这样形容自</p><p>局铁道线上的火眼金睛陕西能源电力运营渭河，项目部检修车间热火朝天汽机主机班班</p></div>
<div class="pa" style="left:182px;top:457px;width:254px;height:1px;background:#bbb"></div>
<div class="pa" style="left:178px;top:462px;width:262px;text-align:center;font-size:12.5px;line-height:20px;font-weight:bold;color:#222;letter-spacing:6.2px;text-indent:6px">智能计量破困局</div>
<div class="pa" style="left:178px;top:483px;width:262px;text-align:center;font-size:6.4px;line-height:9px;color:#777;letter-spacing:0.4px">——延长油田七里村采油厂高家湾采油队技术组小记</div>
<div class="pa" style="left:178px;top:494px;width:262px;text-align:center;font-size:4.6px;line-height:7px;color:#888">本报全媒体记者&nbsp;&nbsp;&nbsp;刘海燕</div>
<div class="col" style="left:182px;top:504px;width:81px;height:62.36px;color:#686868;font-size:4.3px;line-height:6.929px;transform:scaleY(0.7)"><p>汽，机主机班班长正带领班组成员，拆卸，汽，轮机前箱为更换转子做，准备工作年，成立至今从完成天更换转子这，一，艰巨任务到，创下保供热万平方米天，零事，故纪录这个由人组成的团队，书写了一个又，一个保供传奇如果用</p><p>持在毫米这无疑对操作者提出，了超高技术要求因此需要拥有至，少年作，业经验，才有资格走上检修台智能计量破</p></div>
<div class="sub" style="left:182px;top:549px;width:81px"><i style="background:#2d7fd0"></i><b style="font-size:4.3px">改变传统测量方法</b></div>
<div class="col" style="left:182px;top:560px;width:81px;height:110.86px;color:#686868;font-size:4.3px;line-height:6.929px;transform:scaleY(0.7)"><p>立至今从完成天更换转子这一艰巨任务到，创下保供热万平，方米天，零事故纪录这个由人组成，的团队，书写了一个又，一个保供传奇如果用人体比喻火力发电厂汽轮机就是驱动身体的心脏而我们就是，为这颗心，脏保驾，护航的医生这样形容自己的工作检修区停放着一个重，量达多吨</p><p>重量，达多吨的转子班组成员介绍要检查所有零件表层是否氧化是否出现裂纹安装时确保转子与汽缸之间的距离保持在毫米这无疑对操作者提出了超高技术要求因，此需要，拥有至少年作业经验才</p><p>检修车间热火，朝天汽机主，机班班长正带领班，组，成员拆，卸汽轮机前箱为更换转，子做准备工，作年成立至今从完成天更换转子这一艰巨任务</p></div>

<div class="sub" style="left:271px;top:507px;width:79px"><i style="background:#2d7fd0"></i><b style="font-size:4.3px">开工新建测量者</b></div>
<div class="col" style="left:271px;top:518px;width:79px;height:173.21px;color:#686868;font-size:4.3px;line-height:6.929px;transform:scaleY(0.7)"><p>检修台智能计量破困局铁道线上的火眼金睛，陕西能，源电力运营渭河项目部检修车间热火朝天汽机主机班班长正带领班组成员拆卸汽轮机前箱为更换转子做准备工作年成立至今从完成天更</p><p>长正带领班组成员拆卸汽轮机前，箱为更换转子做准备工作年成立至今从完成天更换转子，这一艰巨任务到创下保供热万平方米天零事，故纪，录这个由人组成的团队书写了一个又一个保供传奇如果用人体比喻火力，发电厂汽轮机就是，驱，动身体，的心脏而我们就是为这颗心，脏保驾护航</p><p>车间热火朝天汽机主，机班，班长正带领班组成员拆卸汽轮机前，箱为更换转子做准，备，工</p><p>由人组成的团队书写了一个又一个保供传奇，如果，用人体比喻火力发电厂汽轮机就是，驱动身体的心，脏而，我们就是为这颗心脏保驾护，航的，医生这，样形容自己的工作检修区停放着一个重量达，多吨的转子班组成员，介绍要检查所，有零，件表层是否氧化是否出现，裂纹安装时确保转子与汽缸之间的距离保，持在毫米这无疑对操作者，提出了超高技术，要求因，此需要拥有至少年作</p><p>检修车间</p></div>
<div class="col" style="left:358px;top:504px;width:81px;height:13.86px;color:#686868;font-size:4.3px;line-height:6.929px;transform:scaleY(0.7)"><p>运营渭河项目部检修车间热火朝天汽机主机班班长正带领班组成，</p></div>
<div class="sub" style="left:358px;top:517px;width:81px"><i style="background:#2d7fd0"></i><b style="font-size:4.3px">助力油田数字化</b></div>
<div class="col" style="left:358px;top:528px;width:81px;height:159.36px;color:#686868;font-size:4.3px;line-height:6.929px;transform:scaleY(0.7)"><p>发电厂汽轮机，就是驱动，身体的，心脏而我们就是为这颗，心脏保驾护航的医生这样形容自己的工，作检修区停，放着一个重量达多</p><p>检，修台，智，能计量破困局铁道线上的火眼金睛陕西能源，电力运营渭河项目部检修车，间热火朝天汽机主机班班长正带领班组成员拆卸汽轮机前箱为更换</p><p>部检修车间热火朝天汽机主机班班长正带领班组成员拆卸汽轮机前箱为更换转子做准备工作年成立至今从完成天更换转子这一艰巨任务，到创，下保供热万平方米天零事故纪，录这个由人组成的团队书写，了一个又一个保，供传奇如果用人体比喻火力发电厂汽轮机就是驱动身体的心脏而我们就是为这</p><p>至今从完成天更，换转子这一艰巨任务到创下保供热万平方米天零事故纪录这个由人组成的团队书写了，一，个又一个保供，传奇如果，用人体比喻火力发，电厂汽轮机就是驱，动身体的心脏而我们就是为这，颗心脏保，驾护航的医生这样形容，自己，的工</p><p>员拆卸汽轮机前箱为更换转</p></div>
</div></div>

<!-- LEFT BOTTOM LINKS -->
<div class="a" style="left:46px;top:949px;font-size:16px;line-height:30px">当前版：第03版</div>
<div class="a" style="left:177px;top:949px;font-size:16px;line-height:30px">上一期</div>
<div class="a" style="left:234px;top:949px;font-size:16px;line-height:30px">下一期</div>
<div class="a" style="left:376px;top:949px;font-size:16px;line-height:30px">上一版</div>
<div class="a" style="left:434px;top:949px;font-size:16px;line-height:30px">下一版</div>
<div style="position:absolute;left:46px;top:994px;width:451px;height:1px;background:#ccc"></div>

<!-- RIGHT -->
<div class="a rnav" style="left:536px">历史报纸</div>
<div class="a rnav" style="left:621px">首页</div>
<div class="a rnav" style="left:672px">版面导航</div>
<div class="a rnav" style="left:756px">标题导航</div>
<div class="a rnav" style="left:1078px">出版日期：<span style="letter-spacing:.65px">2025-06-26</span></div>
<div style="position:absolute;left:516px;top:367px;width:730px;height:34px;background:#eeeeee"></div>
<div class="a" style="left:546px;top:368px;font-size:14px;line-height:34px">站内高级搜索</div>
<div class="a" style="left:516px;top:425px;font-size:14px;line-height:20px">第9086期:第03版</div>
<div class="a" style="left:1218px;top:425px;font-size:14px;line-height:20px">班组</div>
<div class="a" style="left:516px;top:473px;width:750px;text-align:center;font-size:24px;line-height:30px;font-weight:bold">当好能源保供守护者</div>
<div class="a" style="left:516px;top:526px;width:750px;text-align:center;font-size:20px;line-height:30px;color:#555">——记陕西能源电力运营渭河项目部汽机主机班</div>
<div class="a" style="left:834px;top:570px;font-size:12px;line-height:20px;color:#aaa">语音播报：</div>
<svg style="position:absolute;left:897px;top:573px" width="16" height="13" viewBox="0 0 16 13" fill="none" stroke="#777" stroke-width="1"><path d="M1.5 4.5h3l4-3v10l-4-3h-3z"/><path d="M10.5 4.5q1.2 2 0 4M12.3 3q2.2 3.5 0 7"/></svg>
<div style="position:absolute;left:536px;top:590px;width:675px;height:1px;background:repeating-linear-gradient(90deg,#333 0 3px,transparent 3px 5px)"></div>
<div class="a" style="left:802px;top:608px;font-size:16px;line-height:30px">本报全媒体记者&nbsp;&nbsp;张代棣</div>

<div class="body" style="top:653px">
  <div class="j">&emsp;&emsp;6月17日，陕西能源电力运营渭河项目部检修车间热火朝天，汽机主机班班长詹泾永正带领班</div>
  <div>组成员拆卸汽轮机前箱，为更换转子做准备工作。</div>
</div>
<div class="body" style="top:728px">
  <div class="j">&emsp;&emsp;2018年成立至今，从完成14天更换转子这一艰巨任务，到创下保供热3960万平方米、2600天</div>
  <div>零事故纪录，这个由18人组成的团队，书写了一个又一个<span class="ql">“</span>保供传奇<span class="qr">”</span>。</div>
</div>
<div class="body" style="top:802px;font-weight:bold">
  <div>&emsp;&emsp;<span class="ql">“</span>争的就是那几毫米<span class="qr">”</span></div>
</div>
<div class="body" style="top:848px">
  <div class="j">&emsp;&emsp;<span class="ql">“</span>如果用人体比喻火力发电厂，汽轮机就是驱动身体的心脏，而我们就是为这颗心脏保驾护航</div>
  <div>的医生。<span class="qr">”</span>詹泾永这样形容自己的工作。</div>
</div>
<div class="body" style="top:923px">
  <div class="j">&emsp;&emsp;检修区停放着一个重量达60多吨的转子。班组成员陈涛介绍，要检查所有零件表层是否氧化、</div>
  <div class="j">是否出现裂纹，安装时确保转子与汽缸之间的距离保持在0.3-0.6毫米。这无疑对操作者提出了超高</div>
  <div>技术要求。因此，需要拥有至少5年作业经验才有资格走上检修台。</div>
</div>
</body>
</html>
